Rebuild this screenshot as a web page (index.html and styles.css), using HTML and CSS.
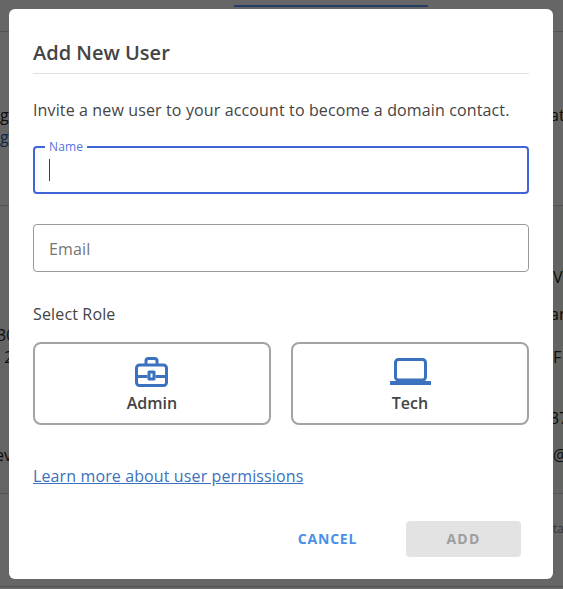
FILE: index.html
```html
<!DOCTYPE html>
<html lang="en">
<head>
<meta charset="utf-8">
<title>Add New User</title>
<link rel="stylesheet" href="styles.css">
</head>
<body>
<div class="page">
  <div class="topbar"><div class="tab"></div></div>
  <div class="intro">
    <div class="bg-row"><span>g</span><span class="cut">at</span></div>
    <div class="bg-row link"><span>gi</span></div>
  </div>
  <div class="panel">
    <div class="bg-row r1"><span></span><span>V.</span></div>
    <div class="bg-row r2"><span></span><span class="cut">ar</span></div>
    <div class="bg-row r3"><span class="cut">30</span></div>
    <div class="bg-row r4"><span>&nbsp;2</span><span>F</span></div>
    <div class="bg-row r5"><span></span><span class="cut">37</span></div>
    <div class="bg-row r6"><span class="cut-more">ev</span><span>@</span></div>
  </div>
  <div class="footer"><div class="bg-row small"><span></span><span>ta</span></div></div>
</div>

<div class="scrim"></div>

<div class="modal">
  <h1 class="title">Add New User</h1>
  <p class="lead">Invite a new user to your account to become a domain contact.</p>

  <div class="field focused">
    <span class="float-label">Name</span>
    <span class="caret"></span>
  </div>

  <div class="field">
    <span class="placeholder">Email</span>
  </div>

  <div class="role-label">Select Role</div>
  <div class="roles">
    <button class="role" type="button">
      <svg class="role-icon admin-icon" width="33" height="30" viewBox="0 0 33 30" fill="none" stroke="#3b71bd" stroke-width="3" stroke-linejoin="round">
        <path d="M11 8V4C11 2.4 12 1.5 13.5 1.5h6C21 1.5 22 2.4 22 4v4"/>
        <rect x="1.5" y="8" width="30" height="20.5" rx="3"/>
        <path d="M1.5 19.5h11M20.5 19.5h11"/>
        <rect x="14" y="15" width="5" height="7"/>
      </svg>
      <span>Admin</span>
    </button>
    <button class="role" type="button">
      <svg class="role-icon" width="41" height="30" viewBox="0 0 41 30" fill="none" stroke="#3b71bd" stroke-width="3" stroke-linejoin="round">
        <rect x="5.5" y="2.5" width="30" height="20.5" rx="3"/>
        <path d="M0 26h41" stroke-width="4"/>
      </svg>
      <span>Tech</span>
    </button>
  </div>

  <a class="learn" href="#">Learn more about user permissions</a>

  <div class="actions">
    <button class="btn cancel" type="button">CANCEL</button>
    <button class="btn add" type="button">ADD</button>
  </div>
</div>
</body>
</html>
```

FILE: styles.css
```css
* { box-sizing: border-box; }

html, body {
  margin: 0;
  height: 100%;
  overflow: hidden;
}

body {
  font-family: "Open Sans", "Noto Sans", sans-serif;
  color: #3d3d3d;
  background: #fff;
}

.page {
  height: 589px;
  display: flex;
  flex-direction: column;
  color: #222;
  font-size: 16px;
}

.topbar {
  height: 32px;
  border-bottom: 1px solid #cfcfcf;
  padding-left: 234px;
}

.tab {
  width: 194px;
  height: 7px;
  border-bottom: 2px solid #5596ff;
}

.intro {
  height: 173px;
  padding-top: 72px;
  background: #fff;
}

.bg-row {
  display: grid;
  grid-template-columns: 553px 1fr;
  height: 22px;
  line-height: 22px;
  white-space: nowrap;
}

.bg-row.link { color: #2a63b8; }

.cut { text-indent: -3px; }
.cut-more { text-indent: -5px; }

.panel {
  height: 289px;
  border-top: 1px solid #cfcfcf;
  border-bottom: 1px solid #cfcfcf;
  background: linear-gradient(90deg, #fafafa 50%, #f3fbf3 50%);
  padding-top: 60px;
}

.r1 { height: 37px; }
.r2 { height: 21px; }
.r3 { height: 22px; }
.r4 { height: 61px; }
.r5 { height: 37px; }

.footer {
  height: 93px;
  flex: none;
  padding-top: 24px;
  border-bottom: 1px solid #cfcfcf;
}

.small {
  font-size: 12px;
  color: #888;
}

.scrim {
  position: fixed;
  inset: 0;
  background: rgba(0, 0, 0, 0.6);
}

.modal {
  position: fixed;
  left: 9px;
  top: 9px;
  width: 544px;
  height: 570px;
  padding: 24px 24px 0;
  background: #fff;
  border-radius: 6px;
}

.title {
  margin: 0;
  height: 41px;
  border-bottom: 1px solid #e0e0e0;
  font-size: 20px;
  font-weight: 600;
  line-height: 40px;
  color: #444;
}

.lead {
  margin: 24px 0 0;
  font-size: 16px;
  line-height: 24px;
  letter-spacing: 0.13px;
  color: #444;
}

.field {
  position: relative;
  height: 48px;
  border: 1px solid #999;
  border-radius: 4px;
  display: flex;
  align-items: center;
  padding: 2px 0 0 15px;
}

.field.focused {
  margin-top: 24px;
  border: 2px solid #3f65d6;
  padding: 0 0 0 14px;
}

.field + .field { margin-top: 30px; }

.float-label {
  position: absolute;
  left: 10px;
  top: -9px;
  padding: 0 4px;
  background: #fff;
  font-size: 12px;
  line-height: 16px;
  letter-spacing: 0.15px;
  color: #5574dc;
}

.caret {
  width: 1px;
  height: 22px;
  background: #2b3f7a;
}

.placeholder {
  font-size: 16px;
  letter-spacing: 0.15px;
  color: #757575;
}

.role-label {
  margin-top: 31px;
  font-size: 16px;
  line-height: 22px;
  letter-spacing: 0.15px;
  color: #444;
}

.roles {
  display: grid;
  grid-template-columns: 238px 238px;
  gap: 20px;
  margin-top: 17px;
}

.role {
  height: 83px;
  padding: 13px 0 0;
  background: #fff;
  border: 2px solid #a3a3a3;
  border-radius: 8px;
  font: 600 16px/22px "Open Sans", "Noto Sans", sans-serif;
  color: #444;
  display: flex;
  flex-direction: column;
  align-items: center;
  gap: 5px;
}

.role-icon { display: block; }
.admin-icon { margin-right: 1px; }

.learn {
  display: block;
  margin-top: 40px;
  font-size: 16px;
  line-height: 22px;
  letter-spacing: 0.12px;
  color: #3b71bd;
  text-decoration: underline;
}

.actions {
  display: flex;
  justify-content: flex-end;
  align-items: center;
  gap: 33px;
  margin-top: 34px;
  padding-right: 8px;
}

.btn {
  height: 36px;
  padding: 0;
  border: 0;
  border-radius: 4px;
  font: 700 14px/36px "Open Sans", "Noto Sans", sans-serif;
  letter-spacing: 0.8px;
  background: none;
}

.cancel {
  width: 91px;
  color: #4a8fe8;
}

.add {
  width: 115px;
  letter-spacing: 1.25px;
  background: #e3e3e3;
  color: #9e9e9e;
}
```
